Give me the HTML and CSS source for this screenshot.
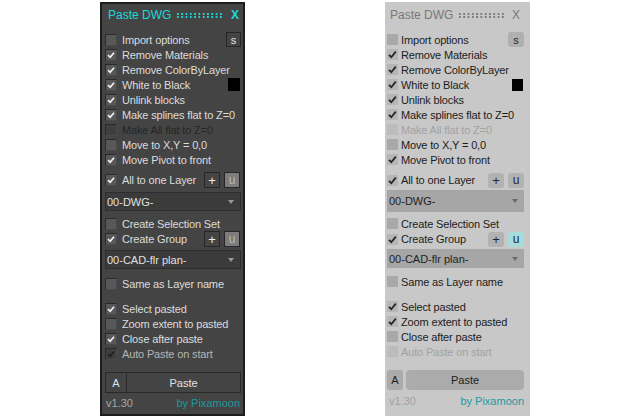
FILE: index.html
```html
<!DOCTYPE html>
<html>
<head>
<meta charset="utf-8">
<link rel="stylesheet" href="styles.css">
</head>
<body>
<div class="stage">

  <div class="panel dark">
    <div class="title"><span class="ttl">Paste DWG</span><span class="dots"></span><span class="close">X</span></div>
    <div class="content">
      <div class="row"><span class="cb"></span><span class="lbl">Import options</span><span class="btn sbtn">s</span></div>
      <div class="row"><span class="cb on"><svg viewBox="0 0 12 12"><path d="M2.5 6.2 L5 8.7 L9.6 3.2"/></svg></span><span class="lbl">Remove Materials</span></div>
      <div class="row"><span class="cb on"><svg viewBox="0 0 12 12"><path d="M2.5 6.2 L5 8.7 L9.6 3.2"/></svg></span><span class="lbl">Remove ColorByLayer</span></div>
      <div class="row"><span class="cb on"><svg viewBox="0 0 12 12"><path d="M2.5 6.2 L5 8.7 L9.6 3.2"/></svg></span><span class="lbl">White to Black</span><span class="swatch"></span></div>
      <div class="row"><span class="cb on"><svg viewBox="0 0 12 12"><path d="M2.5 6.2 L5 8.7 L9.6 3.2"/></svg></span><span class="lbl">Unlink blocks</span></div>
      <div class="row"><span class="cb on"><svg viewBox="0 0 12 12"><path d="M2.5 6.2 L5 8.7 L9.6 3.2"/></svg></span><span class="lbl">Make splines flat to Z=0</span></div>
      <div class="row dis"><span class="cb"></span><span class="lbl">Make All flat to Z=0</span></div>
      <div class="row"><span class="cb"></span><span class="lbl">Move to X,Y = 0,0</span></div>
      <div class="row"><span class="cb on"><svg viewBox="0 0 12 12"><path d="M2.5 6.2 L5 8.7 L9.6 3.2"/></svg></span><span class="lbl">Move Pivot to front</span></div>

      <div class="row tall layer-row"><span class="cb on"><svg viewBox="0 0 12 12"><path d="M2.5 6.2 L5 8.7 L9.6 3.2"/></svg></span><span class="lbl">All to one Layer</span><span class="btn plus">+</span><span class="btn ubtn">u</span></div>
      <div class="dropdown dd1"><span>00-DWG-</span><span class="arrow"></span></div>

      <div class="row sel-row"><span class="cb"></span><span class="lbl">Create Selection Set</span></div>
      <div class="row tall"><span class="cb on"><svg viewBox="0 0 12 12"><path d="M2.5 6.2 L5 8.7 L9.6 3.2"/></svg></span><span class="lbl">Create Group</span><span class="btn plus">+</span><span class="btn ubtn">u</span></div>
      <div class="dropdown dd2"><span>00-CAD-flr plan-</span><span class="arrow"></span></div>

      <div class="row same-row"><span class="cb"></span><span class="lbl">Same as Layer name</span></div>

      <div class="row select-row"><span class="cb on"><svg viewBox="0 0 12 12"><path d="M2.5 6.2 L5 8.7 L9.6 3.2"/></svg></span><span class="lbl">Select pasted</span></div>
      <div class="row"><span class="cb"></span><span class="lbl">Zoom extent to pasted</span></div>
      <div class="row"><span class="cb on"><svg viewBox="0 0 12 12"><path d="M2.5 6.2 L5 8.7 L9.6 3.2"/></svg></span><span class="lbl">Close after paste</span></div>
      <div class="row dis2"><span class="cb on"><svg viewBox="0 0 12 12"><path d="M2.5 6.2 L5 8.7 L9.6 3.2"/></svg></span><span class="lbl">Auto Paste on start</span></div>

      <div class="actions"><span class="abtn">A</span><span class="pbtn">Paste</span></div>
      <div class="footer"><span class="ver">v1.30</span><span class="by">by Pixamoon</span></div>
    </div>
  </div>

  <div class="panel light">
    <div class="title"><span class="ttl">Paste DWG</span><span class="dots"></span><span class="close">X</span></div>
    <div class="content">
      <div class="row"><span class="cb"></span><span class="lbl">Import options</span><span class="btn sbtn">s</span></div>
      <div class="row"><span class="cb on"><svg viewBox="0 0 11 11"><path d="M2 5.8 L4.3 8.2 L8.8 2.6"/></svg></span><span class="lbl">Remove Materials</span></div>
      <div class="row"><span class="cb on"><svg viewBox="0 0 11 11"><path d="M2 5.8 L4.3 8.2 L8.8 2.6"/></svg></span><span class="lbl">Remove ColorByLayer</span></div>
      <div class="row"><span class="cb on"><svg viewBox="0 0 11 11"><path d="M2 5.8 L4.3 8.2 L8.8 2.6"/></svg></span><span class="lbl">White to Black</span><span class="swatch"></span></div>
      <div class="row"><span class="cb on"><svg viewBox="0 0 11 11"><path d="M2 5.8 L4.3 8.2 L8.8 2.6"/></svg></span><span class="lbl">Unlink blocks</span></div>
      <div class="row"><span class="cb on"><svg viewBox="0 0 11 11"><path d="M2 5.8 L4.3 8.2 L8.8 2.6"/></svg></span><span class="lbl">Make splines flat to Z=0</span></div>
      <div class="row dis"><span class="cb"></span><span class="lbl">Make All flat to Z=0</span></div>
      <div class="row"><span class="cb"></span><span class="lbl">Move to X,Y = 0,0</span></div>
      <div class="row"><span class="cb on"><svg viewBox="0 0 11 11"><path d="M2 5.8 L4.3 8.2 L8.8 2.6"/></svg></span><span class="lbl">Move Pivot to front</span></div>

      <div class="row tall layer-row"><span class="cb on"><svg viewBox="0 0 11 11"><path d="M2 5.8 L4.3 8.2 L8.8 2.6"/></svg></span><span class="lbl">All to one Layer</span><span class="btn plus">+</span><span class="btn ubtn">u</span></div>
      <div class="dropdown dd1"><span>00-DWG-</span><span class="arrow"></span></div>

      <div class="row sel-row"><span class="cb"></span><span class="lbl">Create Selection Set</span></div>
      <div class="row tall"><span class="cb on"><svg viewBox="0 0 11 11"><path d="M2 5.8 L4.3 8.2 L8.8 2.6"/></svg></span><span class="lbl">Create Group</span><span class="btn plus">+</span><span class="btn ubtn active">u</span></div>
      <div class="dropdown dd2"><span>00-CAD-flr plan-</span><span class="arrow"></span></div>

      <div class="row same-row"><span class="cb"></span><span class="lbl">Same as Layer name</span></div>

      <div class="row select-row"><span class="cb on"><svg viewBox="0 0 11 11"><path d="M2 5.8 L4.3 8.2 L8.8 2.6"/></svg></span><span class="lbl">Select pasted</span></div>
      <div class="row"><span class="cb on"><svg viewBox="0 0 11 11"><path d="M2 5.8 L4.3 8.2 L8.8 2.6"/></svg></span><span class="lbl">Zoom extent to pasted</span></div>
      <div class="row"><span class="cb"></span><span class="lbl">Close after paste</span></div>
      <div class="row dis"><span class="cb"></span><span class="lbl">Auto Paste on start</span></div>

      <div class="actions"><span class="abtn">A</span><span class="pbtn">Paste</span></div>
      <div class="footer"><span class="ver">v1.30</span><span class="by">by Pixamoon</span></div>
    </div>
  </div>

</div>
</body>
</html>
```

FILE: styles.css
```css
html, body {
  margin: 0;
  padding: 0;
  background: #ffffff;
}

body {
  font-family: "Liberation Sans", Arial, sans-serif;
  font-size: 11px;
}

.stage {
  display: flex;
  align-items: flex-start;
  padding: 2px 0 0 100px;
  gap: 140px;
}

.panel {
  width: 145px;
  height: 414px;
  box-sizing: border-box;
  display: flex;
  flex-direction: column;
}

.title {
  height: 22px;
  display: flex;
  align-items: center;
  flex: none;
}

.dots {
  flex: 1;
  height: 5px;
  margin: 1px 0 0 6px;
  background-image:
    linear-gradient(to right, currentColor 2px, transparent 2px),
    linear-gradient(to right, currentColor 2px, transparent 2px);
  background-size: 4.3px 2px, 4.3px 2px;
  background-position: 0 0, 0 100%;
  background-repeat: repeat-x;
}

.close {
  margin-left: 7px;
  font-size: 12px;
}

.content {
  flex: 1;
  display: flex;
  flex-direction: column;
}

.row {
  display: flex;
  align-items: center;
  height: 15px;
  flex: none;
  white-space: nowrap;
}

.lbl {
  letter-spacing: -0.15px;
}

.row.tall {
  height: 16px;
}

.cb {
  flex: none;
  box-sizing: border-box;
  display: block;
}

.cb svg {
  display: block;
  width: 100%;
  height: 100%;
  fill: none;
}

.btn {
  flex: none;
  box-sizing: border-box;
  display: flex;
  align-items: center;
  justify-content: center;
  height: 15px;
}

.sbtn {
  margin-left: auto;
}

.plus {
  margin-left: auto;
}

.swatch {
  margin-left: auto;
  width: 12px;
  height: 13px;
  background: #000;
  flex: none;
}

.dropdown {
  flex: none;
  display: flex;
  align-items: center;
  box-sizing: border-box;
}

.dropdown span:first-child {
  flex: 1;
}

.arrow {
  width: 0;
  height: 0;
  border-left: 3px solid transparent;
  border-right: 3px solid transparent;
  margin-right: 6px;
  flex: none;
}

.actions {
  display: flex;
  flex: none;
}

.abtn, .pbtn {
  display: flex;
  align-items: center;
  justify-content: center;
  box-sizing: border-box;
}

.pbtn {
  flex: 1;
}

.footer {
  display: flex;
  justify-content: space-between;
  align-items: center;
  flex: none;
}

/* ---------- dark theme ---------- */

.dark {
  background: #444444;
  border: 2px solid #1d1d1d;
  color: #dcdcdc;
}

.dark .title {
  padding: 0 4px 0 6px;
  color: #19d9d9;
}

.dark .ttl {
  font-size: 12px;
}

.dark .close {
  font-weight: bold;
}

.dark .content {
  padding: 6px 2px 0 3px;
}

.dark .cb {
  width: 12px;
  height: 12px;
  margin-right: 5px;
  background: #585858;
  border-top: 1px solid #2a2a2a;
  border-left: 1px solid #2a2a2a;
  border-right: 1px solid #4a4a4a;
  border-bottom: 1px solid #4a4a4a;
}

.dark .cb svg path {
  stroke: #f2f2f2;
  stroke-width: 2;
}

.dark .dis .lbl {
  color: #262626;
}

.dark .dis .cb {
  background: #3f3f3f;
}

.dark .dis2 .lbl {
  color: #b4b4b4;
}

.dark .dis2 .cb {
  background: #3e3e3e;
}

.dark .dis2 .cb svg path {
  stroke: #1e1e1e;
}

.dark .sbtn {
  width: 15px;
  height: 15px;
  border: 1px solid #262626;
  color: #e6e6e6;
}

.dark .plus {
  width: 16px;
  height: 16px;
  border: 1px solid #262626;
  color: #eeeeee;
  font-size: 13px;
}

.dark .ubtn {
  width: 16px;
  height: 16px;
  margin-left: 4px;
  margin-right: 1px;
  border: 1px solid #262626;
  background: #7c7c7c;
  color: #b8b8b8;
  font-size: 12px;
}

.dark .swatch {
  margin-right: 1px;
}

.dark .layer-row {
  margin-top: 5px;
}

.dark .dropdown {
  height: 19px;
  background: #3b3b3b;
  border: 1px solid #2e2e2e;
  padding-left: 1px;
  color: #e0e0e0;
}

.dark .dd1 {
  margin-top: 4px;
}

.dark .dd2 {
  margin-top: 3px;
}

.dark .arrow {
  border-top: 4px solid #9a9a9a;
}

.dark .sel-row {
  margin-top: 5px;
}

.dark .same-row {
  margin-top: 7px;
}

.dark .select-row {
  margin-top: 10px;
}

.dark .actions {
  margin-top: 11px;
  height: 21px;
}

.dark .abtn {
  width: 22px;
  border: 1px solid #292929;
  color: #d8e2f0;
}

.dark .pbtn {
  border: 1px solid #292929;
  border-left: none;
  color: #e0e0e0;
}

.dark .footer {
  height: 20px;
  padding: 0 1px;
}

.dark .ver {
  color: #a8a8a8;
}

.dark .by {
  color: #1a9c9c;
}

/* ---------- light theme ---------- */

.light {
  background: #c8c8c8;
  color: #1c1c1c;
  padding-top: 2px;
}

.light .title {
  padding: 0 10px 0 5px;
  color: #787878;
}

.light .ttl {
  font-size: 12px;
}

.light .content {
  padding: 6px 6px 0 2px;
}

.light .cb {
  width: 11px;
  height: 11px;
  margin-right: 3px;
  background: #a9a9a9;
}

.light .cb.on {
  background: #b6b6b6;
}

.light .cb svg path {
  stroke: #262626;
  stroke-width: 1.8;
}

.light .dis .lbl {
  color: #a2a2a2;
}

.light .dis .cb {
  background: #bcbcbc;
}

.light .sbtn {
  width: 16px;
  height: 15px;
  border-radius: 3px;
  background: #b0b0b0;
  color: #262626;
}

.light .plus {
  width: 16px;
  height: 15px;
  border-radius: 3px;
  background: #b2b2b2;
  color: #262626;
  font-size: 13px;
}

.light .ubtn {
  width: 16px;
  height: 15px;
  margin-left: 4px;
  border-radius: 3px;
  background: #b2b2b2;
  color: #262626;
  font-size: 12px;
}

.light .ubtn.active {
  background: #a6dcdc;
}

.light .swatch {
  width: 11px;
  height: 12px;
  margin-right: 1px;
}

.light .layer-row {
  margin-top: 5px;
}

.light .dropdown {
  height: 22px;
  background: #a6a6a6;
  padding-left: 2px;
  color: #1e1e1e;
}

.light .dd1 {
  margin-top: 2px;
}

.light .dd2 {
  margin-top: 2px;
  height: 19px;
}

.light .arrow {
  border-top: 4px solid #6a6a6a;
}

.light .sel-row {
  margin-top: 4px;
}

.light .same-row {
  margin-top: 6px;
}

.light .select-row {
  margin-top: 10px;
}

.light .actions {
  margin-top: 11px;
  height: 20px;
  gap: 3px;
}

.light .abtn {
  width: 16px;
  border-radius: 3px;
  background: #ababab;
  color: #1e1e1e;
}

.light .pbtn {
  border-radius: 4px;
  background: #ababab;
  color: #1e1e1e;
}

.light .footer {
  height: 22px;
  padding: 0 0 0 2px;
}

.light .ver {
  color: #a0a0a0;
}

.light .by {
  color: #1c9aa2;
}
```
